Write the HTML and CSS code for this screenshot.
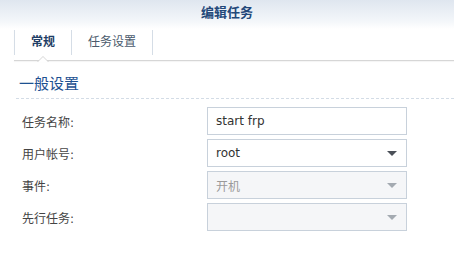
FILE: index.html
```html
<!DOCTYPE html>
<html lang="zh-CN">
  <head>
    <meta charset="UTF-8" />
    <title>编辑任务</title>
    <link rel="stylesheet" href="styles.css">
  </head>
  <body>
    <div class="window">
      <header class="titlebar">编辑任务</header>
      <nav class="tabs">
        <div class="tab active">常规</div>
        <div class="tab">任务设置</div>
      </nav>
      <section class="panel">
        <h3 class="section-title">一般设置</h3>
        <div class="form">
          <label class="field-label">任务名称:</label>
          <div class="field"><span class="value">start frp</span></div>
          <label class="field-label">用户帐号:</label>
          <div class="field select"><span class="value">root</span><span class="arrow"></span></div>
          <label class="field-label">事件:</label>
          <div class="field select disabled"><span class="value">开机</span><span class="arrow"></span></div>
          <label class="field-label">先行任务:</label>
          <div class="field select disabled"><span class="value"></span><span class="arrow"></span></div>
        </div>
      </section>
    </div>
  </body>
</html>
```

FILE: styles.css
```css
* {
  box-sizing: border-box;
}
body {
  margin: 0;
  background: #fff;
  font-family: "DejaVu Sans", "Noto Sans CJK SC", sans-serif;
  font-size: 12px;
  color: #404040;
}
.titlebar {
  height: 29px;
  line-height: 26px;
  text-align: center;
  font-size: 13px;
  font-weight: 700;
  color: #23487a;
  background: linear-gradient(#dfe6ef, #f4f7fa 75%, #fff);
}
/* Tab strip */
.tabs {
  display: flex;
  height: 32px;
  margin-left: 14px;
  padding-top: 1px;
  border-bottom: 1px solid #d6d6d6;
  box-shadow: 0 1px 1px rgba(0, 0, 0, 0.04);
}
.tab {
  position: relative;
  height: 25px;
  line-height: 25px;
  padding: 0 16px;
  border-left: 1px solid #d5dde6;
  color: #4a5a6c;
}
.tab:last-child {
  border-right: 1px solid #d5dde6;
}
.tab.active {
  font-weight: 700;
  color: #1f3e66;
}
.tab.active::before,
.tab.active::after {
  content: "";
  position: absolute;
  left: 50%;
  border-style: solid;
  border-color: transparent;
}
.tab.active::before {
  bottom: -7px;
  margin-left: -6px;
  border-width: 0 6px 6px;
  border-bottom-color: #d6d6d6;
}
.tab.active::after {
  bottom: -7px;
  margin-left: -5px;
  border-width: 0 5px 5px;
  border-bottom-color: #fff;
}
/* Form panel */
.panel {
  padding-top: 14px;
}
.section-title {
  margin: 0 0 0 16px;
  padding: 0 0 5px 3px;
  font-size: 15px;
  font-weight: 400;
  line-height: 18px;
  color: #1d5191;
  border-bottom: 1px dashed #d3dce6;
}
.form {
  display: grid;
  grid-template-columns: 185px 200px;
  row-gap: 4px;
  padding: 8px 0 0 22px;
  align-items: center;
}
.field-label {
  color: #444;
}
.field {
  display: flex;
  align-items: center;
  height: 28px;
  padding: 0 9px 0 8px;
  border: 1px solid #c8d1db;
  background: #fff;
  font-size: 12px;
  color: #333;
}
.field .value {
  flex: 1;
}
.field.disabled {
  background: #f5f6f8;
  color: #9a9a9a;
}
.arrow {
  width: 0;
  height: 0;
  border-style: solid;
  border-width: 5px 5px 0;
  border-color: #4b5058 transparent transparent;
}
.field.disabled .arrow {
  border-top-color: #a4aab1;
}
```
